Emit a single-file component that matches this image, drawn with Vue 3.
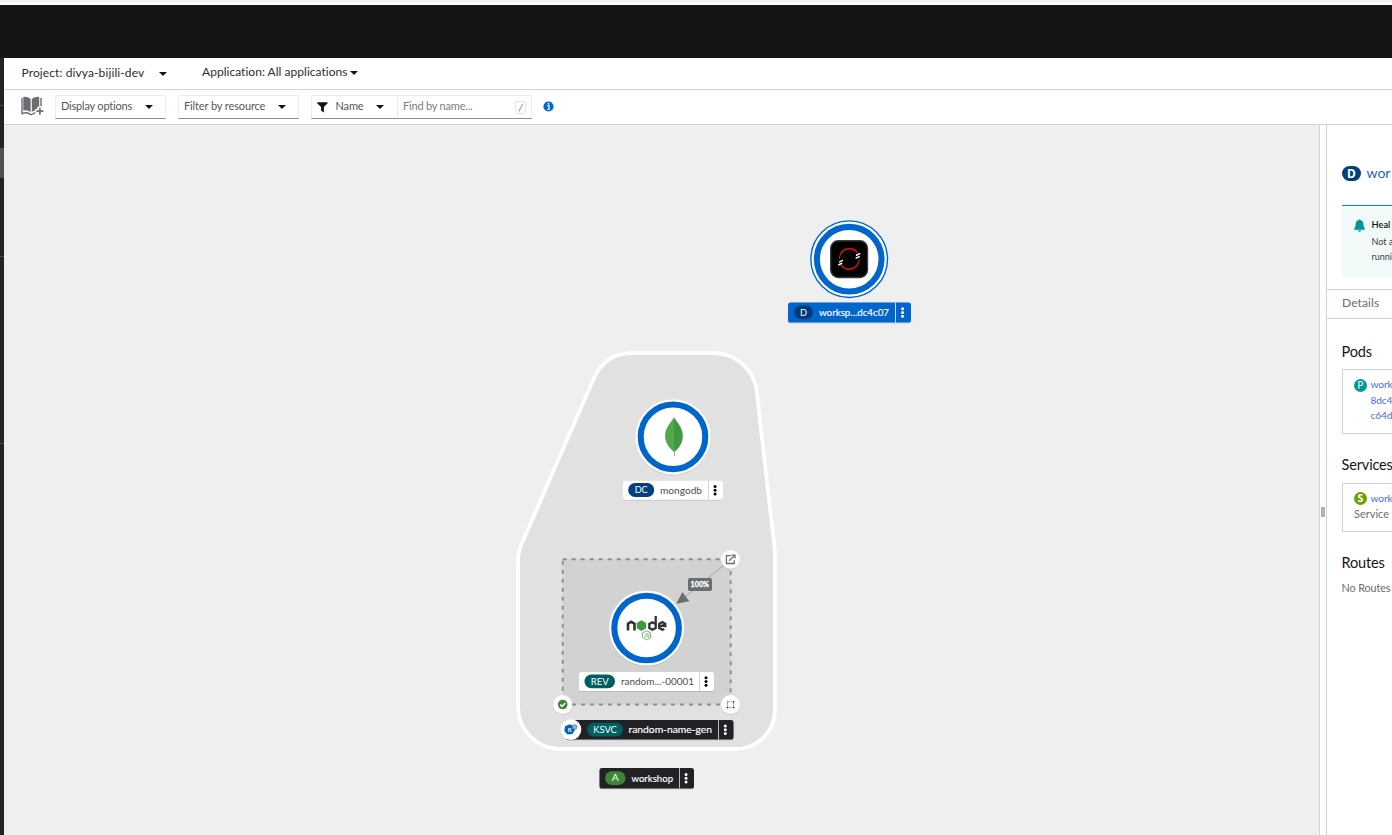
<script setup>
const nodes = [
  { id: 'workspace', x: 849.2, y: 259.2, selected: true },
  { id: 'mongodb', x: 673, y: 436.8 },
  { id: 'random', x: 646.6, y: 628 },
]

const labels = [
  { x: 788, y: 302.5, w: 123, h: 20, sep: 895.5, kind: 'blue', badge: 'D', bx: 794, bw: 19, bc: '#003a7a', bt: 7, text: 'worksp...dc4c07', tx: 819, tw: 70 },
  { x: 623, y: 480.7, w: 100, h: 19, sep: 708.5, kind: 'light', badge: 'DC', bx: 628.2, bw: 26, bc: '#004080', bt: 13, text: 'mongodb', tx: 660, tw: 42 },
  { x: 579, y: 672, w: 135, h: 19, sep: 699.5, kind: 'light', badge: 'REV', bx: 584.5, bw: 30.5, bc: '#005f60', bt: 18, text: 'random...-00001', tx: 621, tw: 73 },
  { x: 566, y: 720, w: 167.5, h: 19.5, sep: 718.5, kind: 'dark', badge: 'KSVC', bx: 587, bw: 36, bc: '#005f60', bt: 23.5, text: 'random-name-gen', tx: 628.5, tw: 83.5 },
  { x: 599.5, y: 768, w: 94.5, h: 20.5, sep: 679.5, kind: 'dark', badge: 'A', bx: 605, bw: 20.5, bc: '#3e8635', bt: 7, text: 'workshop', tx: 631.5, tw: 41.5 },
]
</script>

<template>
  <div class="page">
    <div class="strip"></div>
    <header class="masthead"></header>
    <div class="body">
      <nav class="side">
        <i class="rule r1"></i><i class="active"></i><i class="rule r2"></i><i class="rule r3"></i>
      </nav>
      <main class="main">
        <div class="context">
          <button class="plain project"><span>Project: divya-bijili-dev</span><i class="caret"></i></button>
          <button class="plain application"><span>Application: All applications</span><i class="caret"></i></button>
        </div>
        <div class="toolbar">
          <svg class="book" width="23" height="20" viewBox="0 0 23 20">
            <path d="M2.3 1 Q6.5.3 9.6 3.1 V16 Q6.4 13.7 2.3 14.5Z" fill="#6a6e73" />
            <path d="M10.8 3.1 Q14 .3 18.2 1 V10.7 H16.3 V13 H14.2 V14.4 Q12.2 14.8 10.8 16Z" fill="#6a6e73" />
            <path d="M1 2 V17.6 Q5.5 15.7 8.4 17.9 Q10.2 19.2 12 17.8 Q13.1 16.9 14.5 16.9 M20 2 V10.2" fill="none" stroke="#6a6e73" stroke-width="1.4" />
            <path d="M18.9 11.7 V18.7 M15.4 15.2 H22.4" stroke="#6a6e73" stroke-width="1.7" />
          </svg>
          <button class="select display"><span>Display options</span><i class="caret"></i></button>
          <button class="select resource"><span>Filter by resource</span><i class="caret"></i></button>
          <div class="search">
            <button class="select name">
              <svg width="11" height="11" viewBox="0 0 11 11"><path d="M.4.3H10.4Q11 .8 10.4 1.4L6.9 5.1V10.6L4.1 8.7V5.1L.4 1.4Q0 .8.4.3Z" fill="#151515" /></svg>
              <span>Name</span><i class="caret"></i>
            </button>
            <div class="select find"><span>Find by name...</span><kbd>/</kbd></div>
          </div>
          <svg class="info" width="11" height="11" viewBox="0 0 11 11">
            <circle cx="5.5" cy="5.5" r="5.1" fill="#06c" />
            <path d="M4.3 4.6H6.1V8M4.2 8.2H7" fill="none" stroke="#fff" stroke-width="1.1" /><circle cx="5.5" cy="2.7" r=".9" fill="#fff" />
          </svg>
        </div>
        <div class="workspace">
          <svg class="graph" width="1315" height="710" viewBox="4 125 1315 710">
            <defs>
              <filter id="shade" x="-10%" y="-20%" width="120%" height="150%"><feDropShadow dx="0" dy=".5" stdDeviation=".7" flood-color="#000" flood-opacity=".22" /></filter>
              <linearGradient id="leaf"><stop offset="0" stop-color="#52a84c" /><stop offset=".49" stop-color="#52a84c" /><stop offset=".53" stop-color="#409643" /><stop offset="1" stop-color="#459648" /></linearGradient>
            </defs>
            <path class="group" d="M633 353H712Q735 353 748 370Q755 379 756.5 390L774.3 545Q775 552 775 558V710Q775 726 763.5 737.5Q752 749 735 749H560Q543 749 530.5 736.5Q518 724 518 707V562Q518 552 522 543L594 378Q605 353 633 353Z" />
            <rect class="service" x="562.7" y="559.2" width="168" height="145.3" />

            <path d="M724 565L684 598" stroke="#b0b1b3" stroke-width="1.1" />
            <path d="M676.4 603.8L682.3 592L689.3 601.2Z" fill="#6a6e73" />
            <rect x="688" y="578" width="24" height="13" rx="1.8" fill="#6a6e73" />
            <text class="traffic" x="690.5" y="587.3" textLength="18.5" lengthAdjust="spacingAndGlyphs">100%</text>

            <g v-for="n in nodes" :key="n.id">
              <circle v-if="n.selected" :cx="n.x" :cy="n.y" r="38.3" fill="#fff" stroke="#06c" stroke-width="1.4" />
              <circle v-else :cx="n.x" :cy="n.y" r="37.6" fill="#fff" filter="url(#shade)" />
              <circle :cx="n.x" :cy="n.y" r="32.3" fill="#fff" stroke="#06c" stroke-width="6.1" />
            </g>

            <g>
              <rect x="830.7" y="240.7" width="36.8" height="36.8" rx="7.5" fill="#000" stroke="#3a3a3a" stroke-width="1.4" />
              <path d="M840 255.5A10 10 0 0 1 857.5 252.8M858.6 262.3A10 10 0 0 1 841 265" fill="none" stroke="#d9101a" stroke-width="1.5" />
              <path d="M840 255.5Q839.2 257.5 839.3 259M858.6 262.3Q859.2 260.5 859.1 259.2" fill="none" stroke="#d9101a" stroke-width="1.1" />
              <path d="M856 255.5L860.3 253.4M855.6 258.4L859.8 256.3M839.2 262.1L843 260.2M838.3 265L842.2 263.1" stroke="#fff" stroke-width="1.4" />
            </g>
            <g>
              <path d="M673.9 417.3C676 421.5 682.8 426.5 682.8 436.3C682.8 445.3 676.5 449.7 674.5 452.3C671.3 449.7 665.1 444.2 665.1 436C665.1 427 672 421.5 673.9 417.3Z" fill="url(#leaf)" />
              <path d="M674.1 450.5L674.6 456" stroke="#b7aaa0" stroke-width="1.1" />
            </g>
            <g fill="none" stroke="#333" stroke-width="2.6">
              <path d="M628 630.6V623.7L631.2 621.8L634.5 623.7V630.6" />
              <path d="M641.5 620.3L646.2 622.9V628.3L641.5 631L636.8 628.3V622.9Z" fill="#43963f" stroke="none" />
              <path d="M655.7 616V628L652.4 629.7L649.3 628V623.9L652.4 622.2L655.7 623.9M665.3 627.2V623.8L662.3 622.1L659.2 623.9V628L662.4 629.8L664.3 629M660.3 626.3L665.2 624.7" stroke-width="2.3" />
              <path d="M646.6 630.7L650.7 633V637.5L646.6 639.8L642.4 637.5V633Z" stroke="#66a960" stroke-width=".9" />
              <path d="M646 633V637L644.5 636.4M649 633.7H647.3V635.2H649V636.9H647" stroke="#66a960" stroke-width=".7" />
            </g>

            <g v-for="l in labels" :key="l.text" :class="['label', l.kind]">
              <rect class="plate" :x="l.x" :y="l.y" :width="l.w" :height="l.h" rx="2.6" filter="url(#shade)" />
              <path class="sep" :d="`M${l.sep} ${l.y}v${l.h}`" />
              <rect :x="l.bx" :y="l.y + l.h / 2 - 7.1" :width="l.bw" height="13.8" rx="6.9" :fill="l.bc" />
              <text class="badge" :x="l.bx + (l.bw - l.bt) / 2" :y="l.y + l.h / 2 + 3.2" :textLength="l.bt" lengthAdjust="spacingAndGlyphs">{{ l.badge }}</text>
              <text class="title" :x="l.tx" :y="l.y + l.h / 2 + 3.5" :textLength="l.tw" lengthAdjust="spacingAndGlyphs">{{ l.text }}</text>
              <circle v-for="d in [-3.7, 0, 3.7]" :key="d" class="dot" :cx="(l.sep + l.x + l.w) / 2 - .7" :cy="l.y + l.h / 2 + d" r="1.5" />
            </g>

            <g filter="url(#shade)" fill="#fff">
              <circle cx="730.5" cy="559.3" r="9.4" /><circle cx="562.7" cy="704.5" r="9.4" />
              <circle cx="730.5" cy="704.5" r="9.4" /><circle cx="571" cy="729.6" r="10.3" />
            </g>
            <path d="M731 555.7H726.4V563.5H734.2V560.2M729.2 560.8L734 556M731.6 555.2H735V558.6" fill="none" stroke="#6a6e73" stroke-width="1.3" />
            <circle cx="562.7" cy="704.5" r="4.8" fill="#3e8635" />
            <path d="M560.2 704.5L562.1 706.4L565.3 703.1" fill="none" stroke="#fff" stroke-width="1.4" />
            <path d="M728.5 701.7H733.5V707.2M727.5 703V707.5H732.5" fill="none" stroke="#777" stroke-width=".8" stroke-dasharray="1.5 .6" />
            <path d="M733 701.2h1.3v1.3h-1.3zM733 707h1.3v1.3h-1.3zM726.8 707h1.3v1.3h-1.3zM727.2 701.5h1v1h-1z" fill="#151515" />
            <path d="M569.8 724.2L573.7 726L575 730L572.5 734.1L567.5 734.4L564.3 731L565 726.2Z" fill="#0865ad" />
            <circle cx="574.7" cy="727" r="2.3" fill="#8fb4dc" stroke="#4581bd" stroke-width=".8" />
            <text x="567.7" y="731.8" fill="#fff" font-size="5.8" font-weight="700">K</text>
          </svg>
          <div class="handle"><i></i></div>
          <aside class="panel">
            <h1><b class="pill">D</b><span>wor</span></h1>
            <div class="alert">
              <svg width="11" height="13" viewBox="0 0 11 13"><path d="M4.7 1Q5.5-.4 6.3 1Q9.4 1.8 9.4 5.5Q9.4 8.2 10.8 9.5V10.7H.2V9.5Q1.6 8.2 1.6 5.5Q1.6 1.8 4.7 1ZM3.8 11.3H7.2Q6.5 12.8 5.5 12.8T3.8 11.3Z" fill="#009596" /></svg>
              <div><strong>Heal</strong><p>Not a<br>runni</p></div>
            </div>
            <div class="tabs">Details</div>
            <h2 class="pods-title">Pods</h2>
            <div class="card pods"><b class="round teal">P</b><a>work<br>8dc4<br>c64d</a></div>
            <h2 class="services-title">Services</h2>
            <div class="card services"><div class="line"><b class="round green">S</b><a>work</a></div><p>Service</p></div>
            <h2 class="routes-title">Routes</h2>
            <p class="empty">No Routes</p>
          </aside>
        </div>
      </main>
    </div>
  </div>
</template>

<style>
html, body { overflow: hidden; background: #efefef; }
</style>

<style scoped>
* { box-sizing: border-box; }
.page { width: 1392px; height: 835px; overflow: hidden; display: flex; flex-direction: column; font: 11px/16px Lato, "Noto Sans", sans-serif; color: #151515; white-space: nowrap; }
.strip { height: 5px; flex: none; background: linear-gradient(#eee, #fff); }
.masthead { height: 53px; flex: none; background: #151515; }
.body { display: flex; flex: 1; min-height: 0; }
.side { width: 4px; background: #212427; display: flex; flex-direction: column; flex: none; }
.side i { display: block; flex: none; }
.rule { height: 1px; background: #45484b; }
.r1 { margin-top: 47px; }
.active { margin-top: 42px; height: 30px; background: #4f5255; }
.r2 { margin-top: 78px; }
.r3 { margin-top: 186px; }
.main { flex: none; width: 1388px; display: flex; flex-direction: column; }
.context { height: 32px; flex: none; background: #fff; border-bottom: 1px solid #d2d2d2; display: flex; align-items: center; padding-left: 17.5px; }
button { font: inherit; color: inherit; background: none; border: 0; padding: 0; display: flex; align-items: center; }
button span, .find span { padding-bottom: 2px; }
.caret { width: 0; height: 0; border: 4px solid transparent; border-top: 4.5px solid #151515; border-bottom: 0; flex: none; }
.plain { font-size: 12px; color: #2c2e31; }
.project { width: 145.5px; justify-content: space-between; letter-spacing: .1px; }
.application { margin-left: 35px; gap: 2px; margin-top: -2px; letter-spacing: .03px; }
.toolbar { height: 35px; flex: none; background: #fff; border-bottom: 1px solid #d2d2d2; display: flex; align-items: flex-start; padding: 5px 0 0 17px; }
.book { flex: none; margin: 1px 11px 0 0; }
.select { height: 24px; border: 1px solid #ededed; border-bottom-color: #8a8d90; display: flex; align-items: center; justify-content: space-between; color: #54575b; font-size: 11px; letter-spacing: -.12px; }
.display { width: 111px; padding: 0 12px 0 5px; letter-spacing: -.2px; }
.resource { width: 121px; margin-left: 12px; padding: 0 12px 0 5px; }
.search { display: flex; margin-left: 12px; }
.name { width: 87px; padding: 0 13px 0 5px; }
.name span { margin-right: 5px; }
.find { width: 134px; border-left: 0; padding: 0 5px 0 5px; color: #7b7e82; letter-spacing: -.2px; }
kbd { width: 11px; height: 13px; border: 1px solid #e4e4e4; border-radius: 2px; font: italic 10px/11px Lato, sans-serif; text-align: center; color: #6a6e73; }
.info { margin: 6px 0 0 11px; }
.workspace { display: flex; flex: 1; min-height: 0; }
.graph { flex: none; background: #efefef; display: block; font-family: Lato, "Noto Sans", sans-serif; }
.group { fill: #e1e1e1; stroke: #fff; stroke-width: 3.8; }
.service { fill: #d2d2d2; stroke: #8b8d8f; stroke-width: 1.9; stroke-dasharray: 4 5; }
.traffic { fill: #fff; font-size: 8.2px; font-weight: 700; stroke: #fff; stroke-width: .35px; }
.badge { fill: #fff; font-size: 10px; }
.title { font-size: 9.7px; }
.light .plate { fill: #fff; } .light .title { fill: #4a4d50; } .light .sep { stroke: #d2d2d2; } .light .dot { fill: #000; }
.blue .plate { fill: #06c; } .dark .plate { fill: #212427; }
.blue .title, .dark .title, .blue .dot, .dark .dot { fill: #fff; }
.blue .title, .dark .title { stroke: #fff; stroke-width: .15px; }
.blue .sep { stroke: #c6dcf3; } .dark .sep { stroke: #b8bbbe; }
.handle { width: 8px; flex: none; background: #fff; border: 1px solid #d2d2d2; border-width: 0 1px; padding: 382px 0 0 1px; }
.handle i { display: block; width: 4px; height: 10px; background: #b0b0b0; }
.panel { width: 65px; background: #fff; overflow: hidden; display: flex; flex-direction: column; flex: none; }
.panel > * { flex: none; }
h1, h2, p { margin: 0; font-weight: 400; }
h1 { margin: 38px 0 0 15px; height: 20px; display: flex; align-items: center; font-size: 14px; color: #2b5fc0; }
.pill { flex: none; width: 19px; height: 15px; border-radius: 8px; background: #004080; color: #fff; font: 700 12px/15px "Noto Sans", sans-serif; text-align: center; margin-right: 5.5px; }
.alert { margin: 22px 0 0 15px; height: 72px; border-top: 1px solid #009596; background: #f2f9f9; padding: 10px 0 0 12px; display: flex; font-size: 9px; line-height: 15px; color: #3c3f42; }
.alert svg { flex: none; margin: 3px 6.5px 0 0; }
.alert p { padding-top: 1px; }
.alert strong { display: block; font-weight: 600; font-size: 9.3px; line-height: 17px; color: #151515; }
.tabs { margin-top: 12px; height: 30px; border: 1px solid #d2d2d2; border-width: 1px 0; padding-left: 15px; font-size: 12px; line-height: 25px; color: #6a6e73; letter-spacing: .1px; }
h2 { margin-left: 14.5px; font-size: 14.5px; line-height: 20px; color: #151515; letter-spacing: -.15px; }
.pods-title { margin-top: 23px; }
.card { margin-left: 15px; width: 90px; border: 1px solid #d2d2d2; font-size: 10.2px; line-height: 15.5px; }
.card a { color: #4a6fd0; letter-spacing: -.15px; }
.pods { margin-top: 7px; height: 65px; padding: 7px 0 0 11px; display: flex; }
.round { flex: none; width: 13px; height: 13px; border-radius: 50%; color: #fff; font: 10.5px/13px "Noto Sans", sans-serif; text-align: center; margin: 1px 3.5px 0 0; }
.pods .round { margin-top: 2px; }
.teal { background: #009596; }
.green { background: #6ca100; font-weight: 700; }
.services-title { margin-top: 21px; }
.services { margin-top: 8px; height: 49px; padding: 7px 0 0 11px; color: #6a6e73; }
.services p { font-size: 11px; margin-top: -1px; }
.line { display: flex; }
.routes-title { margin-top: 21px; }
.empty { margin: 7px 0 0 14.5px; font-size: 10.8px; color: #6a6e73; letter-spacing: -.1px; }
</style>
